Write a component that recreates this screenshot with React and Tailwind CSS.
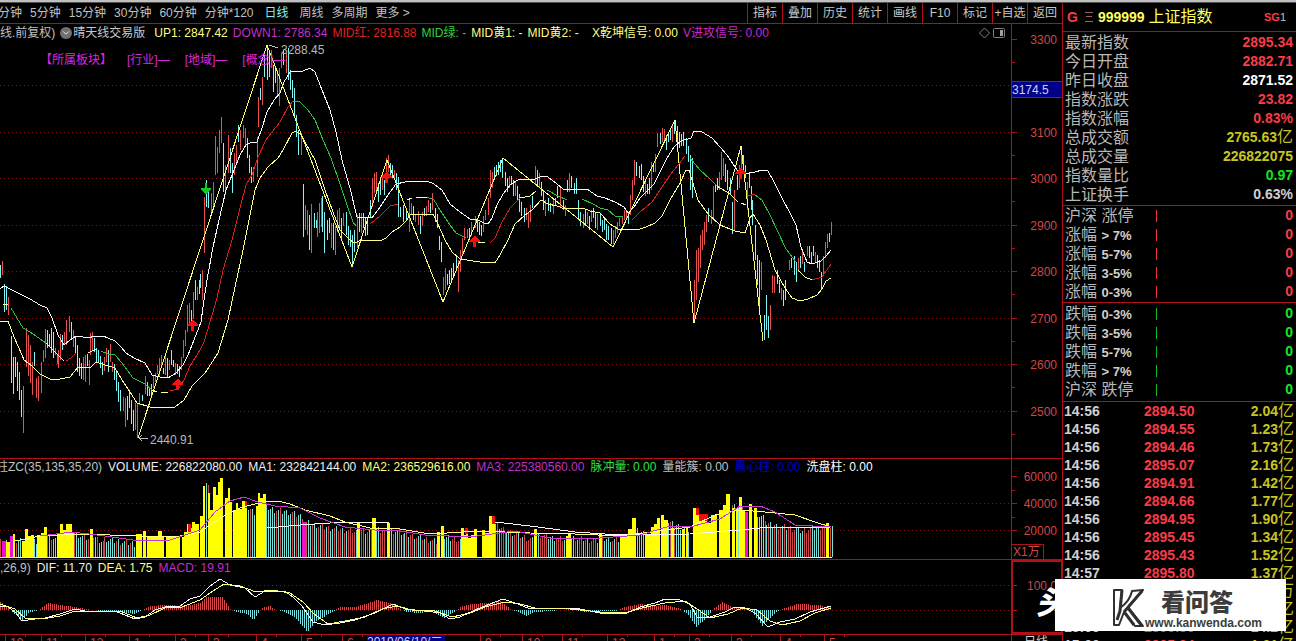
import React from 'react';
import clsx from 'clsx';
import { ChevronDown } from 'lucide-react';

const PERIODS = ['分钟', '5分钟', '15分钟', '30分钟', '60分钟', '分钟*120', '日线', '周线', '多周期', '更多 >'];
const TOOLS = ['指标', '叠加', '历史', '统计', '画线', 'F10', '标记', '+自选', '返回'];

const MAIN_LEGEND = [
  ['UP1: 2847.42', 'text-[#ffff80]'],
  ['DOWN1: 2786.34', 'text-[#c030c8]'],
  ['MID红: 2816.88', 'text-[#e02020]'],
  ['MID绿: -', 'text-[#30d040]'],
  ['MID黄1: -', 'text-[#ffff80]'],
  ['MID黄2: -', 'mr-2 text-[#ffff80]'],
  ['X乾坤信号: 0.00', 'text-[#ffff80]'],
  ['V进攻信号: 0.00', 'text-[#c828d0]'],
];

const VOLUME_LEGEND = [
  ['柱ZC(35,135,35,20)', '-ml-1 text-[#c0c0c0]'],
  ['VOLUME: 226822080.00', 'text-[#f0f0f0]'],
  ['MA1: 232842144.00', 'text-[#f0f0f0]'],
  ['MA2: 236529616.00', 'text-[#ffff80]'],
  ['MA3: 225380560.00', 'text-[#c030c8]'],
  ['脉冲量: 0.00', 'text-[#30e040]'],
  ['量能簇: 0.00', 'text-[#c0c0c0]'],
  ['黑心柱: 0.00', 'text-[#0000c0]'],
  ['洗盘柱: 0.00', 'text-white'],
];

const MACD_LEGEND = [
  [',26,9)', 'text-[#c0c0c0]'],
  ['DIF: 11.70', 'text-[#f0f0f0]'],
  ['DEA: 1.75', 'text-[#ffff80]'],
  ['MACD: 19.91', 'text-[#c030c8]'],
];

const QUOTE = [
  ['最新指数', '2895.34', 'text-[#f83c48]'],
  ['今日开盘', '2882.71', 'text-[#f83c48]'],
  ['昨日收盘', '2871.52', 'text-white'],
  ['指数涨跌', '23.82', 'text-[#f83c48]'],
  ['指数涨幅', '0.83%', 'text-[#f83c48]'],
  ['总成交额', '2765.63亿', 'text-[#c8c420]'],
  ['总成交量', '226822075', 'text-[#c8c420]'],
  ['指数量比', '0.97', 'text-[#10e820]'],
  ['上证换手', '0.63%', 'text-[#d0d0d0]'],
];

const RISING = [['沪深', '涨停'], ['涨幅', '> 7%'], ['涨幅', '5-7%'], ['涨幅', '3-5%'], ['涨幅', '0-3%']];
const FALLING = [['跌幅', '0-3%'], ['跌幅', '3-5%'], ['跌幅', '5-7%'], ['跌幅', '> 7%'], ['沪深', '跌停']];

const TICKS = [
  ['14:56', '2894.50', '2.04', '亿'],
  ['14:56', '2894.55', '1.23', '亿'],
  ['14:56', '2894.46', '1.73', '亿'],
  ['14:56', '2895.07', '2.16', '亿'],
  ['14:56', '2894.91', '1.42', '亿'],
  ['14:56', '2894.66', '1.77', '亿'],
  ['14:56', '2894.95', '1.90', '亿'],
  ['14:56', '2895.45', '1.34', '亿'],
  ['14:56', '2895.43', '1.52', '亿'],
  ['14:57', '2895.80', '1.37', '亿'],
  ['14:57', '2895.80', '4532', '万'],
  ['14:58', '2895.80', '1.12', '亿'],
  ['15:00', '2895.36', '14.2', '亿'],
  ['15:00', '2895.34', '1.01', '亿'],
];

// high-low bars: direction, x, top, bottom
const BARS = `
c0 265 278;r2 261 275;c4 284 312;c6 286 310;r8 297 315;c11 336 383;c13 357 394;c15 357 377;c17 362 391;c19 372 400;c21 390 417;r23 386 433;
r26 328 367;r28 335 376;r30 345 383;r32 362 395;c34 352 366;r36 378 398;r38 376 401;r41 362 393;r43 350 362;r45 329 358;c47 330 348;c49 334 346;
c51 328 353;c53 332 358;r55 348 355;r57 354 364;r58 350 368;r60 334 360;c62 335 350;r64 332 345;r66 320 345;r69 316 332;c71 322 340;r73 330 347;
c75 337 353;c77 345 372;c79 358 376;c81 363 379;r83 357 380;r85 355 382;c87 354 366;r89 360 385;r90 333 355;r92 332 350;c94 338 352;c96 348 363;
c98 350 362;c100 356 368;c102 362 375;r104 357 371;r106 348 362;c108 350 372;r110 344 362;r112 362 372;c114 364 380;c116 370 391;c118 382 402;
c120 390 411;r123 397 411;r125 398 427;c127 396 420;c129 390 408;c131 400 424;c133 410 431;r135 403 430;r137 404 438;r139 393 405;c142 395 401;
r145 376 394;c147 382 396;c149 387 396;c151 384 395;r153 375 388;r155 373 382;r157 365 374;r159 358 376;r161 355 367;c163 368 374;r165 355 375;
c167 358 377;r169 360 370;c171 350 365;c173 360 367;r175 363 375;c177 364 374;c179 366 377;r181 357 370;r183 340 358;r185 330 346;r187 305 332;
r189 303 325;c191 310 330;r193 292 319;c195 280 300;r197 287 300;c199 280 294;c200 274 288;r202 270 300;r204 197 253;c206 180 207;c208 190 208;
r211 193 213;r213 182 207;r215 136 175;r217 147 173;r219 130 153;r221 117 143;c223 143 192;r225 165 195;r228 135 173;c230 148 173;c232 163 193;
r234 153 175;r236 145 163;c238 125 142;r240 130 150;r243 125 138;r245 128 145;c247 138 158;c249 155 173;c251 167 183;r253 167 182;r257 137 177;
r258 97 127;c260 88 100;r262 77 105;c264 55 77;c267 48 80;c269 53 77;r271 50 68;c273 65 92;c275 68 83;r277 70 97;r279 68 106;r281 53 68;
c283 50 65;r286 53 73;c288 48 80;c290 70 90;c292 80 98;c294 88 117;c296 115 137;c298 130 155;r301 133 155;c303 184 237;r305 205 230;r307 210 235;
c309 215 250;r311 204 253;c314 213 228;c316 220 228;r317 212 237;r319 203 233;r321 198 227;c322 196 232;c324 212 253;c327 220 240;c329 218 233;
r331 223 248;c333 223 250;r335 226 255;r337 210 232;r339 208 228;c341 218 238;r343 213 226;c346 212 235;c348 226 245;c350 230 247;c352 235 266;
c354 230 252;r357 215 248;c359 213 232;r361 213 233;c363 213 228;c365 218 236;c367 217 235;c370 200 217;r372 178 207;r374 173 193;r376 172 190;
c378 183 202;c380 177 195;r382 173 190;c384 180 195;r386 158 178;r388 155 172;c390 163 175;c392 165 178;r394 170 180;c396 173 190;c398 177 217;
c400 207 217;c403 205 222;c406 208 220;r409 198 232;r411 203 215;c413 206 220;r415 214 222;r418 211 225;c420 216 234;r422 212 226;c424 208 216;
r426 206 216;r428 200 212;c430 203 213;r432 193 210;c435 208 222;c437 214 228;c439 236 250;c441 242 262;r443 277 295;r445 268 290;c447 274 285;
c449 270 284;c451 268 282;c453 263 275;c456 256 268;r458 260 292;r460 250 272;r462 238 256;r464 228 240;r467 229 238;c469 228 238;r471 222 236;
r475 216 228;c477 220 232;c479 222 235;c481 225 236;r483 216 232;r485 210 220;r488 198 215;r490 170 198;r492 172 188;c494 167 180;c496 165 176;
c498 162 175;c500 160 172;c502 158 178;c505 172 186;c507 178 192;r509 176 188;c511 176 185;c513 180 196;r515 182 196;c517 186 200;c519 194 212;
c521 202 216;c524 208 222;r526 208 220;r528 212 228;r530 205 222;c532 196 208;r535 166 185;c537 170 185;r539 173 188;c541 182 196;c543 190 210;
r545 200 216;c548 198 211;c550 203 212;r553 200 214;c555 198 205;c557 186 198;r560 188 208;c563 200 210;r565 205 216;c567 180 192;r569 173 192;
c571 176 188;c574 183 194;c576 178 194;c578 200 220;c580 212 226;r583 214 228;c585 210 226;r587 212 224;c589 216 230;r591 210 222;c593 208 218;
c595 212 228;r597 214 230;c600 214 226;c602 220 232;c604 218 230;c606 224 240;c608 226 240;c611 228 244;r613 230 244;r615 226 238;r617 222 233;
r619 218 226;r622 216 224;r624 210 220;r626 210 220;c628 212 224;r630 195 215;r632 180 200;r634 160 185;c636 162 176;c639 166 178;c641 164 180;
c643 176 192;r645 182 196;c647 184 194;c649 178 194;r651 162 190;c653 164 172;r655 154 172;r657 133 147;c660 133 144;r662 128 142;r664 129 140;
c666 135 150;c668 132 142;c670 128 140;r672 124 142;c674 120 134;c677 126 144;c679 132 148;c681 134 146;c683 132 146;c686 138 154;c688 146 162;
c690 155 190;c692 158 198;r694 280 322;r696 250 300;r698 248 282;r700 235 268;r702 230 250;r704 222 245;r706 215 232;c708 208 222;r711 210 224;
r713 186 220;c715 184 192;c717 178 190;r719 172 190;r721 152 180;r723 158 176;c725 164 182;c727 170 190;c730 178 195;c732 202 234;r734 190 230;
c737 175 190;r739 165 188;r741 148 172;c743 155 172;c745 165 178;r747 182 210;c749 172 188;c751 186 210;c752 200 225;c755 225 260;c757 255 285;
c759 260 310;r761 262 290;c764 315 340;c766 295 330;c768 316 338;r770 305 330;r772 275 293;r774 276 293;c777 270 284;c779 280 293;r781 288 300;
c783 290 306;c785 280 300;r789 260 270;c791 258 268;c794 256 275;c796 262 282;r798 258 272;c800 256 268;r802 252 264;c804 262 272;r807 246 256;
c809 246 258;c811 252 264;c813 246 256;r815 252 262;c817 255 268;c819 260 272;c821 272 290;r823 256 276;r825 242 258;r827 234 248;c829 233 242;
r831 222 235`
  .split(';')
  .map((s) => {
    const [head, top, bottom] = s.trim().split(' ');
    return { up: head[0] === 'r', x: Number(head.slice(1)), top: Number(top), bottom: Number(bottom) };
  });

const PRICE_LINES = [
  // upper band
  ['#f8f8f8', '0,289 4,286 16,292 30,299 40,305 47,308 52,318 58,335 64,345 70,340 76,336 90,338 93,336 103,336 115,341 121,347 126,353 134,358 145,363 152,375 160,377 168,378 176,373 183,365 188,355 194,340 201,322 204,300 207,280 213,247 219,220 226,190 234,170 240,155 246,145 250,143 257,142 262,128 267,112 274,100 280,93 284,82 290,72 303,71 310,68 315,72 322,90 330,110 336,132 342,160 350,188 357,217 372,218 378,210 388,195 396,184 405,182 427,181 434,184 442,190 450,204 460,212 470,219 478,220 484,223 488,224 492,218 497,205 503,194 511,184 518,180 535,179 543,176 548,177 557,184 563,189 573,190 587,189 597,196 605,198 615,202 624,207 628,213 634,207 640,198 648,190 654,184 660,172 667,158 674,147 681,141 691,138 694,131 702,132 712,138 720,147 727,155 737,170 744,174 755,172 762,170 768,171 774,182 783,200 790,213 796,225 801,247 807,262 812,264 821,261 826,256 831,250'],
  // lower band
  ['#ffff90', '0,321 8,321 14,337 22,355 24,360 32,366 40,374 50,379 60,379 70,377 78,367 90,368 96,362 105,365 115,368 122,380 130,392 137,403 150,407 175,407 184,400 192,386 205,373 218,353 228,320 235,287 243,250 249,220 255,190 260,178 268,167 278,158 283,150 292,133 296,131 301,135 315,160 325,190 333,212 340,230 350,240 354,243 362,240 380,241 386,238 392,232 400,227 407,220 410,215 433,214 437,222 445,240 452,252 460,259 480,262 495,263 500,255 508,240 515,224 525,215 532,210 541,200 548,204 557,206 565,209 583,208 590,211 600,213 610,224 618,229 637,230 646,227 655,223 662,216 670,200 680,183 686,170 689,170 692,180 698,200 708,214 720,225 735,231 745,233 750,218 753,214 760,225 766,240 775,270 785,288 792,298 800,301 808,299 817,295 822,289 826,281 831,278'],
  // zigzag
  ['#ffff70', '138,438 267,45 352,267 387,160 443,302 503,158 613,247 675,120 694,323 741,146 763,341'],
  // falling mid
  ['#30c040', '11,308 17,318 23,328 30,332 46,343'],
  ['#30c040', '101,351 108,354 115,355 122,363 133,378 145,384 152,390'],
  ['#30c040', '293,101 300,102 308,110 315,120 323,140 331,158 340,184 347,205 353,222 356,226'],
  ['#30c040', '427,197 434,200 440,210 450,225 456,233 466,238'],
  ['#30c040', '547,190 558,196 567,200'],
  ['#30c040', '582,199 593,204 600,208 608,210 615,216 623,217'],
  ['#30c040', '690,158 700,170 710,179 717,186'],
  ['#30c040', '755,195 762,200 770,215 778,232 786,249 796,262'],
  // rising mid
  ['#d82020', '66,361 71,358 76,353'],
  ['#d82020', '170,391 178,389 184,380 190,366 200,350 204,342 210,322 217,298 223,270 232,240 240,208 246,185 252,175 258,157 266,140 272,132 280,122 288,107 293,101'],
  ['#d82020', '370,224 380,216 390,206 398,204'],
  ['#d82020', '490,243 495,238 502,222 510,208 520,198'],
  ['#d82020', '632,220 640,212 652,202 660,190 670,175 678,165 685,156'],
  ['#d82020', '748,196 755,194'],
  ['#d82020', '812,280 822,277 831,264'],
  // flat mid
  ['#ffff90', '3,304 8,305'],
  ['#ffff90', '46,343 54,351 58,355 64,361'],
  ['#ffff90', '88,353 96,349'],
  ['#ffff90', '152,390 157,392'],
  ['#ffff90', '161,392 168,392'],
  ['#ffff90', '407,200 412,198'],
  ['#ffff90', '416,198 427,197'],
  ['#ffff90', '478,242 485,243'],
  ['#ffff90', '520,198 530,196 536,191'],
  ['#ffff90', '717,186 730,194 738,202'],
  ['#ffff90', '741,203 746,205'],
  ['#ffff90', '798,270 805,277 812,280'],
];

const GRID = [85, 132, 178, 225, 271, 318, 364, 411];
const PRICE_TICKS = [[39, '3300'], [132, '3100'], [178, '3000'], [225, '2900'], [271, '2800'], [318, '2700'], [364, '2600'], [411, '2500']];
const UP_ARROWS = [[387, 177], [475, 241], [741, 173], [193, 325], [178, 384]];

// thin volume bars: from x, to x, top at the start, top at the end
const THIN = [
  [0, 12, 542, 541], [14, 24, 541, 540], [34, 38, 541, 540], [47, 57, 536, 541], [74, 90, 533, 540], [93, 104, 536, 543],
  [104, 136, 539, 544], [206, 210, 482, 490], [246, 256, 508, 514], [266, 284, 508, 512], [284, 304, 511, 517],
  [306, 330, 523, 528], [330, 357, 528, 532], [361, 372, 530, 532], [376, 386, 529, 533], [391, 404, 530, 534], [404, 437, 534, 542],
  [444, 462, 538, 540], [495, 506, 525, 531], [506, 535, 531, 541], [538, 566, 535, 540], [571, 599, 538, 541], [602, 620, 539, 540],
  [635, 645, 530, 534], [668, 690, 522, 531], [732, 745, 505, 510], [755, 766, 513, 520], [766, 800, 524, 530], [800, 826, 531, 526], [830, 833, 528, 528],
];

// solid volume bars: x, width, top
const SOLID = [
  [6, 4, 542], [13, 2, 534], [22, 3, 541], [25, 3, 529], [28, 3, 536], [31, 3, 535], [37, 4, 535], [41, 3, 533], [44, 3, 527],
  [57, 3, 533], [60, 3, 524], [63, 3, 530], [66, 3, 524], [69, 3, 524], [72, 2, 533], [90, 3, 529],
  [136, 6, 534], [143, 3, 531], [147, 11, 537], [158, 4, 531], [162, 2, 537], [166, 14, 536], [182, 3, 537], [184, 3, 532],
  [187, 3, 524], [190, 2, 528], [192, 3, 522], [195, 4, 524], [200, 3, 516], [203, 2, 486], [208, 2, 493], [210, 3, 510],
  [213, 3, 487], [216, 2, 495], [218, 2, 482], [220, 3, 478], [225, 3, 498], [228, 2, 488], [230, 2, 502], [233, 3, 510], [236, 2, 503],
  [238, 4, 509], [242, 3, 501], [245, 2, 508], [256, 2, 506], [258, 2, 493], [260, 3, 498], [263, 3, 494],
  [357, 3, 522], [372, 4, 518], [387, 3, 523], [437, 3, 532], [441, 3, 526], [461, 3, 528], [464, 2, 535], [466, 2, 528], [468, 3, 538],
  [471, 3, 535], [474, 3, 529], [482, 3, 530], [485, 4, 533], [489, 3, 516], [492, 3, 524], [534, 3, 529], [566, 2, 536], [568, 3, 533], [599, 3, 533],
  [620, 8, 535], [628, 4, 529], [632, 4, 518], [645, 6, 534], [651, 3, 527], [654, 3, 524], [657, 3, 518], [661, 3, 515], [664, 4, 520], [671, 3, 528], [682, 3, 529], [686, 2, 526],
  [693, 3, 508], [696, 6, 515], [702, 5, 519], [707, 4, 523], [711, 6, 515], [719, 4, 510], [723, 3, 505], [726, 4, 494], [732, 3, 508],
  [736, 2, 508], [739, 3, 497], [742, 3, 510], [749, 3, 504], [754, 3, 508], [826, 3, 523],
];
const MAGENTA = [[2, 4, 541], [10, 3, 536], [302, 4, 522], [745, 3, 512]];
const RED_CAPS = [[188, 3, 524, 8], [245, 2, 501, 7], [492, 3, 516, 8], [465, 3, 528, 6], [696, 3, 508, 7], [699, 9, 514, 7]];

const VOLUME_LINES = [
  ['#f8f8f8', '267,528 300,525 330,523 390,522 495,522 530,526 575,532 620,535 690,534 740,530 760,528 831,527'],
  ['#ffff80', '15,541 40,536 80,534 140,536 175,537 200,532 222,517 240,508 262,502 278,501 290,504 305,510 330,516 345,522 370,528 400,529 430,534 480,531 530,533 575,534 620,536 660,531 690,527 715,515 740,510 765,512 795,515 815,522 831,527'],
  ['#c838d0', '40,536 72,532 105,536 140,541 170,540 200,530 215,512 230,501 244,497 258,502 275,506 300,508 320,518 345,527 375,530 400,531 425,535 470,537 515,531 550,538 600,538 640,535 670,526 690,527 720,519 740,506 760,506 775,512 795,525 831,527'],
];

const MACD_HEIGHTS = [
  [0, 8], [8, 2], [10, 0], [22, -11], [28, -3], [38, 0], [48, 7], [60, 5], [75, 3], [85, 1], [100, -1], [118, -2], [135, -4], [141, 0], [150, 4],
  [165, 5], [185, 4], [200, 7], [206, 13], [222, 13], [230, 1], [235, -2], [247, -4], [253, -10], [258, -3], [262, 2], [270, 4], [275, 0],
  [283, -1], [295, -8], [307, -22], [315, -12], [325, -6], [332, -2], [340, 3], [355, 3], [365, 6], [377, 10], [392, 6], [400, 1], [405, -2],
  [420, -3], [430, -1], [445, -8], [455, -1], [460, 3], [470, 6], [490, 7], [500, 9], [510, 1], [515, -1], [526, -6], [535, -2], [550, -1],
  [570, 1], [585, -2], [600, -1], [615, -1], [625, 3], [640, 6], [655, 4], [665, 5], [680, 1], [687, -4], [696, -17], [706, -8], [712, 0],
  [722, 8], [735, 2], [745, 1], [752, -2], [762, -16], [775, -3], [785, 2], [797, 6], [820, 5], [825, 2], [831, 3],
];

const MACD_LINES = [
  ['#f8f8f8', '0,606 8,607 15,612 22,621 35,619 45,618 60,614 75,609 90,612 100,611 115,611 125,615 135,619 145,617 155,610 165,607 180,606 190,599 200,596 210,586 220,579 230,585 245,588 255,597 265,591 285,591 293,597 302,606 313,622 325,625 340,623 355,620 375,613 393,604 405,609 425,611 440,613 450,619 460,617 475,610 490,604 503,599 515,603 528,608 550,609 575,608 600,613 625,614 640,607 655,603 665,599 680,600 690,604 697,617 710,617 725,612 735,607 745,608 755,613 768,627 780,622 795,619 810,612 831,606'],
  ['#ffff80', '0,604 15,609 25,618 42,619 60,616 75,611 90,611 120,611 137,618 150,615 165,608 182,607 200,600 213,591 224,584 240,586 256,592 272,590 290,593 303,602 314,614 328,624 345,621 365,617 382,609 397,606 412,610 435,611 452,617 470,613 485,607 505,602 520,604 535,608 570,609 600,612 625,613 642,608 665,603 685,601 697,609 710,618 728,614 742,608 757,610 770,621 782,625 800,621 815,613 831,608'],
];

const DATE_LABELS = [
  [10, '10'], [46, '11'], [90, '12'], [134, '1'], [180, '2'], [213, '3'], [261, '4'], [306, '5'], [347, '6'],
  [485, '9'], [527, '10'], [567, '11'], [612, '12'], [659, '1'], [694, '2'], [736, '3'], [785, '4'], [829, '5'],
];

const barPath = (up) =>
  BARS.filter((b) => b.up === up).map((b) => `M${b.x} ${b.top}h1V${b.bottom}h-1z`).join('');

// every other pixel column, with a small ripple so the tops are uneven
const thinPath = (up) =>
  THIN.flatMap(([from, to, a, b]) => {
    const out = [];
    for (let x = from; x < to; x += 2) {
      const isUp = (x * 7 + (x >> 3) * 5) % 11 < (x > 766 || (x > 310 && x < 600) ? 6 : 3);
      const top = Math.round(a + ((b - a) * (x - from)) / (to - from) + ((x * 13) % 7) - 3);
      if (isUp === up) out.push(`M${x} ${top}h1V557h-1z`);
    }
    return out;
  }).join('');

const macdPath = (up) => {
  let d = '';
  for (let i = 1; i < MACD_HEIGHTS.length; i++) {
    const [x0, h0] = MACD_HEIGHTS[i - 1];
    const [x1, h1] = MACD_HEIGHTS[i];
    for (let x = x0 + (x0 % 2); x < x1; x += 2) {
      const h = Math.round(h0 + ((h1 - h0) * (x - x0)) / (x1 - x0));
      if (h !== 0 && h > 0 === up) d += `M${x} 610h1V${610 - h}h-1z`;
    }
  }
  return d;
};

function Lines({ data }) {
  return data.map(([color, points], i) => (
    <polyline key={i} points={points} fill="none" stroke={color} strokeWidth="1" />
  ));
}

function Grid({ rows }) {
  return rows.map((y) => (
    <line key={y} x1="0" x2="1011" y1={y + 0.5} y2={y + 0.5} stroke="#8a1414" strokeDasharray="1 3" />
  ));
}

function Legend({ items }) {
  return (
    <div className="flex h-4 shrink-0 items-center gap-[6px] overflow-hidden whitespace-nowrap">
      {items.map(([text, color]) => (
        <span key={text} className={color}>{text}</span>
      ))}
    </div>
  );
}

function AxisLabel({ y, children }) {
  return (
    <text x="1057" y={y + 5} textAnchor="end" fill="#d04848" className="text-[12px]">{children}</text>
  );
}

function PricePanel() {
  return (
    <section className="flex min-h-0 flex-1 border-b border-[#b01018]">
      <div className="relative flex min-w-0 flex-1 flex-col">
        <div className="flex h-[18px] shrink-0 items-center gap-[5px] overflow-hidden pr-1 whitespace-nowrap">
          <span className="text-[#c0c0c0]">线.前复权)</span>
          <button aria-label="指标选项" className="flex h-3 w-3 items-center justify-center rounded-full bg-[#707070] text-white">
            <ChevronDown className="h-[10px] w-[10px]" />
          </button>
          <span className="-ml-1 mr-1 text-[#c8c8c8]">晴天线交易版</span>
          {MAIN_LEGEND.map(([text, color]) => (
            <span key={text} className={color}>{text}</span>
          ))}
          <svg className="ml-auto h-3 w-7 shrink-0" viewBox="0 0 28 12" fill="none" stroke="#808080">
            <path d="M0.5 6L5.5 1L10.5 6L5.5 11z" />
            <rect x="14.5" y="1.5" width="11" height="9" rx="1" />
            <rect x="21" y="3" width="3" height="6" fill="#a0a0a0" stroke="none" />
          </svg>
        </div>
        <svg className="block min-h-0 w-full flex-1" viewBox="0 42 1011 416" preserveAspectRatio="xMinYMin meet" shapeRendering="crispEdges">
          <Grid rows={GRID} />
          <path d={barPath(true)} fill="#e85050" />
          <path d={barPath(false)} fill="#80f8f8" />
          <Lines data={PRICE_LINES} />
          <path d="M205 183h2v5h4v1l-5 6l-5 -6v-1h4z" fill="#10c820" />
          {UP_ARROWS.map(([x, y]) => (
            <path key={x} d={`M${x} ${y - 6}l5 6v1h-4v5h-3v-5h-4v-1z`} fill="#f81010" />
          ))}
          <path d="M269 45l9 3M139 438h9M139 438l3 -3M139 438l3 3" stroke="#c0c0c0" fill="none" />
          <text x="281" y="54" fill="#b8b8b8" className="text-[12px]">3288.45</text>
          <text x="150" y="444" fill="#b8b8b8" className="text-[12px]">2440.91</text>
        </svg>
        <div className="absolute top-[27px] left-10 flex gap-[15px] whitespace-nowrap text-[#d828e0]">
          <span className="w-[72px]">【所属板块】</span>
          <span>[行业]—</span>
          <span>[地域]—</span>
          <span>[概念]—</span>
        </div>
      </div>
      <div className="relative w-[51px] shrink-0 border-l border-[#b01018]">
        <svg className="block h-full w-full" viewBox="1012 24 50 434" preserveAspectRatio="xMinYMin meet">
          <path d={PRICE_TICKS.map(([y]) => `M1012 ${y + 0.5}h5M1012 ${y + 23.5}h3`).join('')} stroke="#b01018" />
          {PRICE_TICKS.map(([y, label]) => (
            <AxisLabel key={label} y={y}>{label}</AxisLabel>
          ))}
        </svg>
        <div className="absolute inset-x-0 top-[57px] flex h-[17px] items-center border-y border-[#b01018] bg-[#000088] text-[#d0d0f0]">
          3174.5
        </div>
      </div>
    </section>
  );
}

function VolumePanel() {
  return (
    <section className="flex h-[101px] shrink-0 border-b border-[#b01018]">
      <div className="flex min-w-0 flex-1 flex-col">
        <Legend items={VOLUME_LEGEND} />
        <svg className="block min-h-0 w-full flex-1" viewBox="0 475 1011 84" preserveAspectRatio="xMinYMin meet" shapeRendering="crispEdges">
          <Grid rows={[503, 530]} />
          <path d={thinPath(true)} fill="#d04848" />
          <path d={thinPath(false)} fill="#78e0d8" />
          {SOLID.map(([x, w, top]) => (
            <rect key={x} x={x} y={top} width={w} height={557 - top} fill="#ffff00" />
          ))}
          {MAGENTA.map(([x, w, top]) => (
            <rect key={x} x={x} y={top} width={w} height={557 - top} fill="#f010d0" />
          ))}
          {RED_CAPS.map(([x, w, y, h]) => (
            <rect key={x} x={x} y={y} width={w} height={h} fill="#e81010" />
          ))}
          <Lines data={VOLUME_LINES} />
          <rect x="0" y="557" width="832" height="1" fill="#f0f0e0" />
        </svg>
      </div>
      <div className="relative w-[51px] shrink-0 border-l border-[#b01018]">
        <svg className="block h-full w-full" viewBox="1012 459 50 100" preserveAspectRatio="xMinYMin meet">
          <path d="M1012 476.5h5M1012 490.5h3M1012 503.5h5M1012 517.5h3M1012 530.5h5" stroke="#b01018" />
          <AxisLabel y={476}>60000</AxisLabel>
          <AxisLabel y={503}>40000</AxisLabel>
          <AxisLabel y={530}>20000</AxisLabel>
        </svg>
        <div className="absolute bottom-0 left-0 flex h-[15px] w-8 items-center border-t border-r border-[#b01018] pl-px text-[#d04848]">
          X1万
        </div>
      </div>
    </section>
  );
}

function MacdPanel() {
  return (
    <section className="flex h-[75px] shrink-0 border-b border-[#b01018]">
      <div className="flex min-w-0 flex-1 flex-col">
        <Legend items={MACD_LEGEND} />
        <svg className="block min-h-0 w-full flex-1" viewBox="0 576 1011 58" preserveAspectRatio="xMinYMin meet" shapeRendering="crispEdges">
          <Grid rows={[585, 610]} />
          <path d={macdPath(true)} fill="#d84848" />
          <path d={macdPath(false)} fill="#78e0e0" />
          <Lines data={MACD_LINES} />
        </svg>
      </div>
      <div className="w-[51px] shrink-0 border-2 border-r border-[#b01018]">
        <svg className="block h-full w-full" viewBox="1013 562 48 70" preserveAspectRatio="xMinYMin meet">
          <path d="M1013 585.5h4M1013 610.5h4" stroke="#b01018" />
          <AxisLabel y={585}>100.0</AxisLabel>
        </svg>
      </div>
    </section>
  );
}

function DateAxis() {
  return (
    <div className="flex h-[6px] shrink-0 overflow-hidden">
      <div className="relative min-w-0 flex-1">
        <svg className="block h-full w-full" viewBox="0 635 1011 6" preserveAspectRatio="xMinYMin meet">
          <path d={DATE_LABELS.map(([x]) => `M${x - 5}.5 635v6M${x + 15}.5 635v2`).join('')} stroke="#b01018" />
          {DATE_LABELS.map(([x, label]) => (
            <text key={x} x={x} y="647" fill="#d04848" className="text-[12px]">{label}</text>
          ))}
        </svg>
        <div className="absolute top-0 left-[367px] w-[78px] bg-[#000088] leading-[15px] whitespace-nowrap text-[#d0d0f0]">2019/06/10/二</div>
      </div>
      <div className="w-[51px] border-l border-[#b01018] pl-3 leading-[14px] text-[#d0d0d0]">日线</div>
    </div>
  );
}

function RangeTable({ rows, rising }) {
  return (
    <table className="w-full table-fixed">
      <tbody>
        {rows.map(([name, range]) => (
          <tr key={name + range} className="h-[19px]">
            <th scope="row" className="w-[91px] p-0 text-left text-[16px] leading-[19px] font-normal text-[#b8b8b8]">
              {name} <span className={/\d/.test(range) ? 'text-[13px] leading-none font-bold text-[#d0d0d0]' : 'leading-none'}>{range}</span>
            </th>
            <td className="p-0">
              <div className={rising ? 'h-3 w-px bg-[#f03038]' : 'h-3 w-px bg-[#10b820]'} />
            </td>
            <td className={clsx('p-0 text-right text-[14px] leading-[19px] font-bold', rising ? 'text-[#f83c48]' : 'text-[#10e820]')}>0</td>
          </tr>
        ))}
      </tbody>
    </table>
  );
}

function Sidebar() {
  return (
    <aside className="flex w-[234px] shrink-0 flex-col overflow-hidden border-l border-[#b01018]">
      <header className="flex h-[29px] shrink-0 items-center border-b border-[#b01018] pr-[10px] pl-1">
        <span className="text-[14px] font-bold text-[#f83c48]">G</span>
        <svg className="mr-[5px] ml-[7px] h-3 w-2" viewBox="0 0 8 12" stroke="#a06060">
          <path d="M0 1.5h8M1 5.5h6M0 10.5h8" />
        </svg>
        <span className="text-[14px] font-bold text-[#ffff60]">999999</span>
        <span className="ml-1 text-[16px] text-[#ffff60]">上证指数</span>
        <span className="ml-auto text-[11px] font-bold text-[#f83c48]">SG<span className="font-normal text-[#c0c0c0]">1</span></span>
      </header>
      <div className="border-b border-[#b01018] py-px pr-[3px] pl-[2px]">
        <table className="w-full">
          <tbody>
            {QUOTE.map(([label, value, color]) => (
              <tr key={label} className="h-[19px]">
                <th scope="row" className="p-0 text-left text-[16px] leading-[19px] font-normal text-[#b8b8b8]">{label}</th>
                <td className={clsx('p-0 text-right text-[14px] leading-[19px] font-bold', color)}>
                  {value.replace('亿', '')}
                  {value.includes('亿') && <span className="text-[16px] leading-none font-normal">亿</span>}
                </td>
              </tr>
            ))}
          </tbody>
        </table>
      </div>
      <div className="border-b border-[#b01018] pr-[3px] pb-px pl-[2px]">
        <RangeTable rows={RISING} rising />
      </div>
      <div className="border-b border-[#b01018] pt-px pr-[3px] pb-[2px] pl-[2px]">
        <RangeTable rows={FALLING} />
      </div>
      <div className="min-h-0 flex-1 overflow-hidden pr-[2px] pl-px">
        <table className="w-full table-fixed text-[14px] leading-[18px] font-bold">
          <tbody>
            {TICKS.map(([time, price, volume, unit], i) => (
              <tr key={i} className="h-[18px]">
                <td className="w-[80px] p-0 text-[#d0d0d0]">{time}</td>
                <td className="p-0 text-[#f83c48]">{price}</td>
                <td className="p-0 text-right whitespace-nowrap text-[#c8c420]">
                  {volume}<span className="text-[16px] leading-none font-normal">{unit}</span>
                </td>
              </tr>
            ))}
          </tbody>
        </table>
      </div>
    </aside>
  );
}

function Watermark() {
  return (
    <>
      <div className="absolute right-[228px] bottom-[22px] text-[32px] leading-8 font-black text-white italic">头</div>
      <div className="absolute right-[10px] bottom-[10px] h-[52px] w-[231px] bg-white text-[#3c3c3c]">
        <svg className="absolute top-2 left-[57px] h-[42px] w-[34px]" viewBox="0 0 34 42">
          <path d="M2 3L10 3L8 21Q18 14 20 4L31 3L16 20L31 39L23 39L12 25L7 38L2 38z" fill="#fff" stroke="#303030" strokeWidth="2" strokeLinejoin="round" />
          <path d="M10 3L8 24L5 33M30 4L12 25M16 21L30 39M13 26L22 38" fill="none" stroke="#303030" strokeWidth="3" />
        </svg>
        <div className="absolute top-[10px] left-[106px] text-[24px] leading-7 font-black">看问答</div>
        <a href="#kanwenda" className="absolute top-[37px] left-[90px] text-[12px] leading-[14px] font-bold">www.kanwenda.com</a>
      </div>
    </>
  );
}

export default function App() {
  return (
    <div className="relative flex h-screen flex-col overflow-hidden bg-black font-['Liberation_Sans','Noto_Sans_CJK_SC',sans-serif] text-[12px] leading-[18px]">
      <div className="h-[3px] shrink-0 border-b border-[#505050] bg-[#c0c0c0]" />
      <div className="flex min-h-0 flex-1">
        <main className="flex min-w-0 flex-1 flex-col">
          <nav className="flex h-[21px] shrink-0 items-stretch justify-between overflow-hidden border-b border-[#b01018]">
            <div className="-ml-[2px] flex items-center gap-2 whitespace-nowrap text-[#c0c0c0]">
              {PERIODS.map((p) => (
                <button key={p} className={clsx(p === '日线' && 'mx-[3px] text-[#80f0f0]')}>{p}</button>
              ))}
            </div>
            <div className="flex text-[#c8c8c8]">
              {TOOLS.map((t) => (
                <button key={t} className="w-[35px] border-l border-[#b01018] whitespace-nowrap">{t}</button>
              ))}
            </div>
          </nav>
          <PricePanel />
          <VolumePanel />
          <MacdPanel />
          <DateAxis />
        </main>
        <Sidebar />
      </div>
      <Watermark />
    </div>
  );
}
